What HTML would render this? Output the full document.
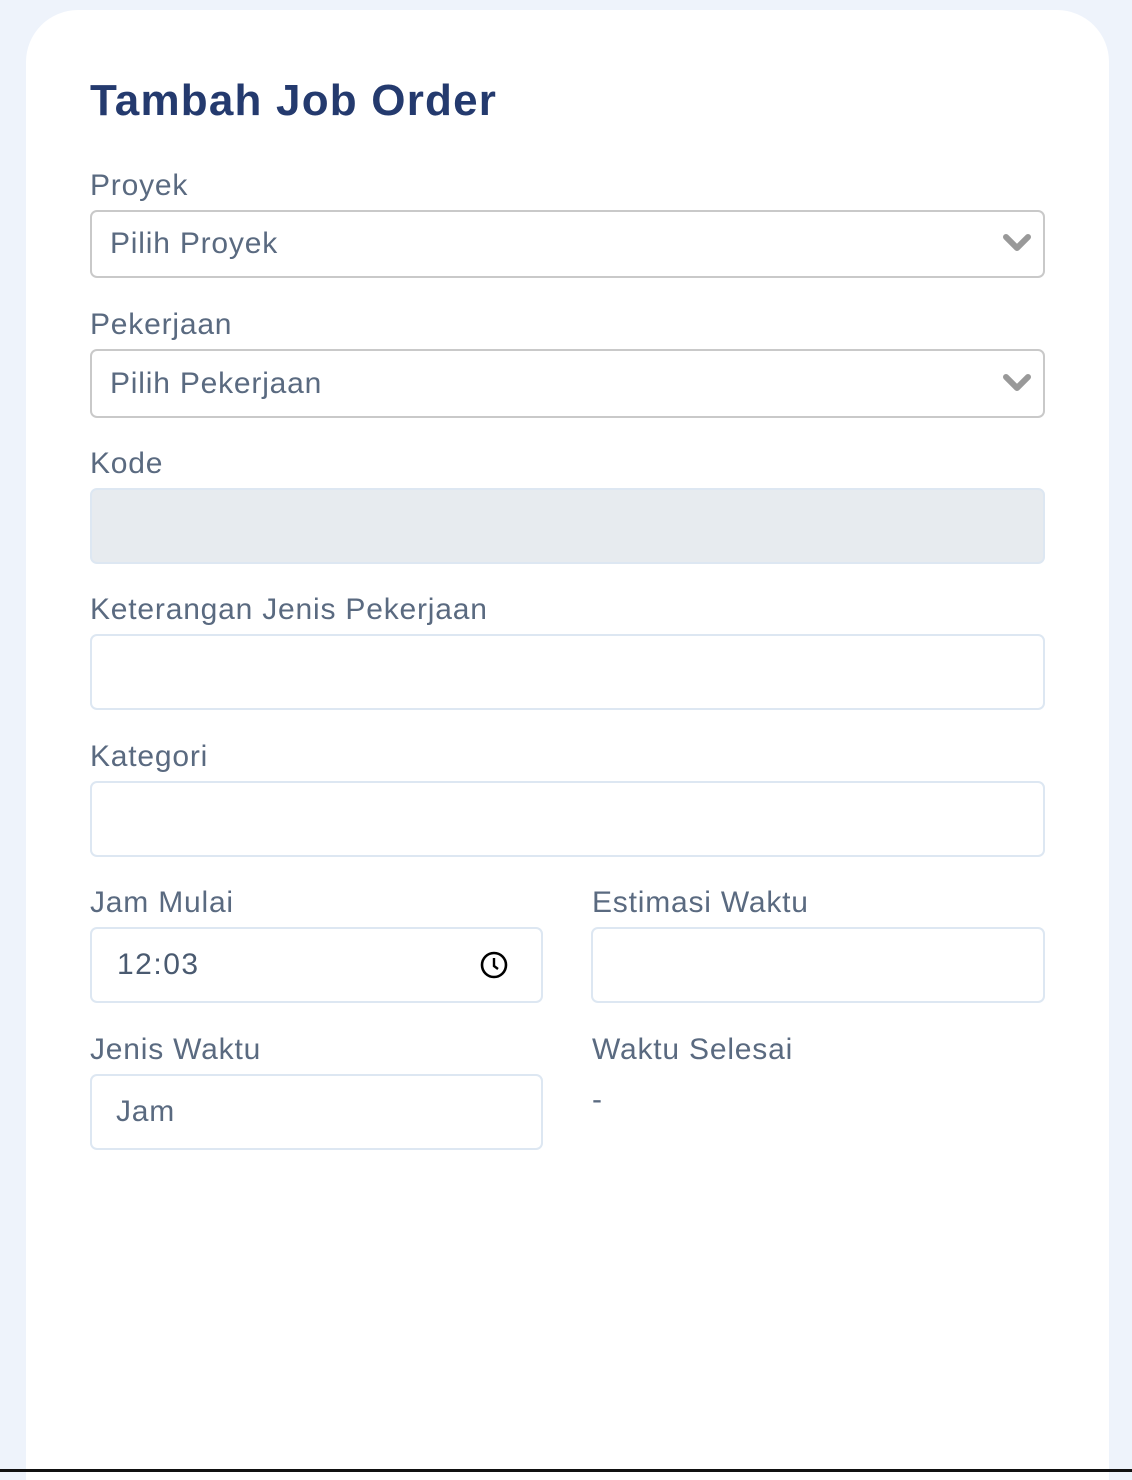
<!DOCTYPE html>
<html><head><style>
html,body{margin:0;padding:0}
body{width:1132px;height:1472px;background:#eef3fb;position:relative;overflow:hidden;font-family:"Liberation Sans",sans-serif}
.card{position:absolute;left:26px;top:10px;width:1083px;height:1470px;background:#fff;border-radius:52px 52px 0 0}
.abs{position:absolute}
h1{position:absolute;left:90px;top:76px;margin:0;font-size:44px;font-weight:bold;color:#243a6e;letter-spacing:1.2px}
.lbl{position:absolute;font-size:30px;color:#5a6a80;letter-spacing:0.8px}
.box{position:absolute;box-sizing:border-box;border:2px solid #dde7f2;border-radius:7px;background:#fff}
.sel{border-color:#c9c9c9}
.txt{position:absolute;font-size:30px;color:#5a6a80;letter-spacing:0.8px}
.line{position:absolute;left:0;top:1469px;width:1132px;height:3px;background:#111}
</style></head><body>
<div class="card"></div>
<h1>Tambah Job Order</h1>
<div class="lbl" style="left:90px;top:169px">Proyek</div>
<div class="box sel" style="left:90px;top:210px;width:955px;height:68px"></div>
<div class="txt" style="left:110px;top:227px">Pilih Proyek</div>
<svg class="abs" style="left:1002px;top:232px" width="30" height="22" viewBox="0 0 30 22"><path d="M4 5 L15 16 L26 5" fill="none" stroke="#999" stroke-width="6" stroke-linecap="round" stroke-linejoin="round"/></svg>
<div class="lbl" style="left:90px;top:308px">Pekerjaan</div>
<div class="box sel" style="left:90px;top:349px;width:955px;height:69px"></div>
<div class="txt" style="left:110px;top:367px">Pilih Pekerjaan</div>
<svg class="abs" style="left:1002px;top:372px" width="30" height="22" viewBox="0 0 30 22"><path d="M4 5 L15 16 L26 5" fill="none" stroke="#999" stroke-width="6" stroke-linecap="round" stroke-linejoin="round"/></svg>
<div class="lbl" style="left:90px;top:447px">Kode</div>
<div class="box" style="left:90px;top:488px;width:955px;height:76px;background:#e7ebef"></div>
<div class="lbl" style="left:90px;top:593px">Keterangan Jenis Pekerjaan</div>
<div class="box" style="left:90px;top:634px;width:955px;height:76px"></div>
<div class="lbl" style="left:90px;top:740px">Kategori</div>
<div class="box" style="left:90px;top:781px;width:955px;height:76px"></div>
<div class="lbl" style="left:90px;top:886px">Jam Mulai</div>
<div class="box" style="left:90px;top:927px;width:453px;height:76px"></div>
<div class="txt" style="left:117px;top:948px;color:#4a5a70;letter-spacing:1.5px">12:03</div>
<svg class="abs" style="left:479px;top:950px" width="30" height="30" viewBox="0 0 30 30"><circle cx="15" cy="15" r="12" fill="none" stroke="#000" stroke-width="2.6"/><path d="M15 8 V16 L19 19" fill="none" stroke="#000" stroke-width="2.4"/></svg>
<div class="lbl" style="left:592px;top:886px">Estimasi Waktu</div>
<div class="box" style="left:591px;top:927px;width:454px;height:76px"></div>
<div class="lbl" style="left:90px;top:1033px">Jenis Waktu</div>
<div class="box" style="left:90px;top:1074px;width:453px;height:76px"></div>
<div class="txt" style="left:116px;top:1095px">Jam</div>
<div class="lbl" style="left:592px;top:1033px">Waktu Selesai</div>
<div class="txt" style="left:592px;top:1083px">-</div>
<div class="line"></div>
</body></html>
